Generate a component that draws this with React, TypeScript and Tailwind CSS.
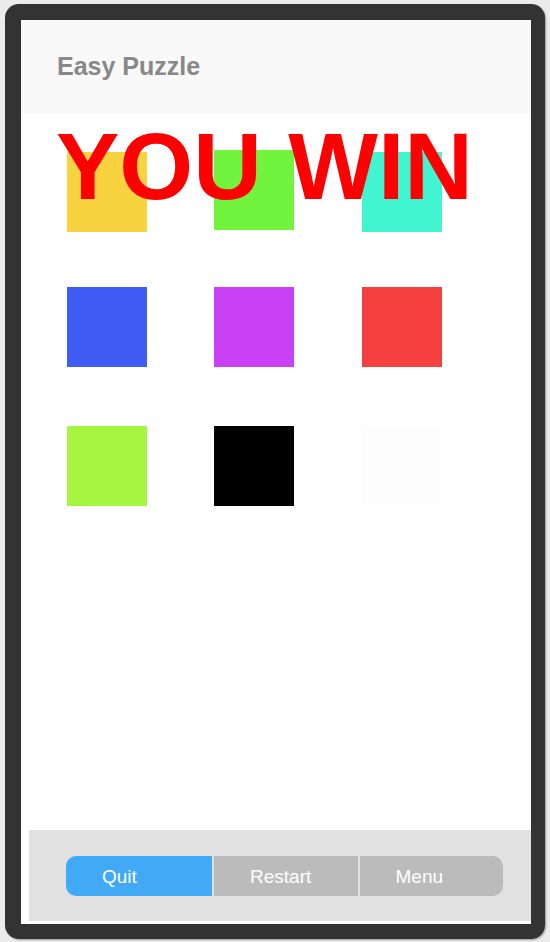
// Easy Puzzle — win screen inside a phone-style frame
import React from 'react';

type Tile = { color: string; nudge?: string };

const rows: Tile[][] = [
  [{ color: 'bg-[#f6d33f]' }, { color: 'bg-[#72f43f]', nudge: '-mt-[2px]' }, { color: 'bg-[#40f5cf]' }],
  [{ color: 'bg-[#3f5cf5]' }, { color: 'bg-[#c940f5]' }, { color: 'bg-[#f54040]' }],
  [{ color: 'bg-[#a6f540]' }, { color: 'bg-black' }, { color: 'bg-[#fdfdfd]' }],
];

const rowGaps = ['mt-[39px]', 'mt-[55px]', 'mt-[59px]'];
const colGaps = ['', 'ml-[67px]', 'ml-[68px]'];

const buttons = [
  { label: 'Quit', cls: 'w-[146px] bg-[#41a9f5]' },
  { label: 'Restart', cls: 'flex-1 bg-[#bbbbbb]' },
  { label: 'Menu', cls: 'flex-1 bg-[#bbbbbb]' },
];

export default function App() {
  return (
    <div className="w-[550px] h-[942px] bg-[#ececec] pt-[4px] px-[5px] pb-[3px] font-['Liberation_Sans',Arial,sans-serif]">
      <div className="h-full flex rounded-[14px] bg-[#333333] pl-[16px] pr-[14px] pt-[16px] pb-[15px] shadow-[1px_1px_2px_rgba(0,0,0,0.35)]">
        <div className="flex-1 flex flex-col bg-white">
          {/* header */}
          <div className="h-[93px] bg-[#f9f9f9] flex items-center pl-[36px]">
            <h1 className="text-[25px] font-bold text-[#888888]">Easy Puzzle</h1>
          </div>

          {/* board */}
          <div className="relative flex-1 pl-[46px]">
            {rows.map((row, r) => (
              <div key={r} className={`flex items-start ${rowGaps[r]}`}>
                {row.map((t, i) => (
                  <div key={i} className={`w-[80px] h-[80px] ${colGaps[i]} ${t.color} ${t.nudge ?? ''}`} />
                ))}
              </div>
            ))}
            <div className="absolute left-[35px] top-[6px] text-[95px] leading-none font-bold text-[#ff0000] whitespace-nowrap">
              YOU WIN
            </div>
          </div>

          {/* bottom bar */}
          <div className="pb-[3px]">
            <div className="ml-[8px] h-[91px] bg-[#e1e1e1] flex items-center pl-[37px]">
              <div className="w-[437px] h-[40px] flex gap-[2px] rounded-[10px] overflow-hidden">
                {buttons.map((b) => (
                  <button
                    key={b.label}
                    className={`flex items-center pl-[36px] pt-[3px] text-[19px] text-white ${b.cls}`}
                  >
                    {b.label}
                  </button>
                ))}
              </div>
            </div>
          </div>
        </div>
      </div>
    </div>
  );
}
